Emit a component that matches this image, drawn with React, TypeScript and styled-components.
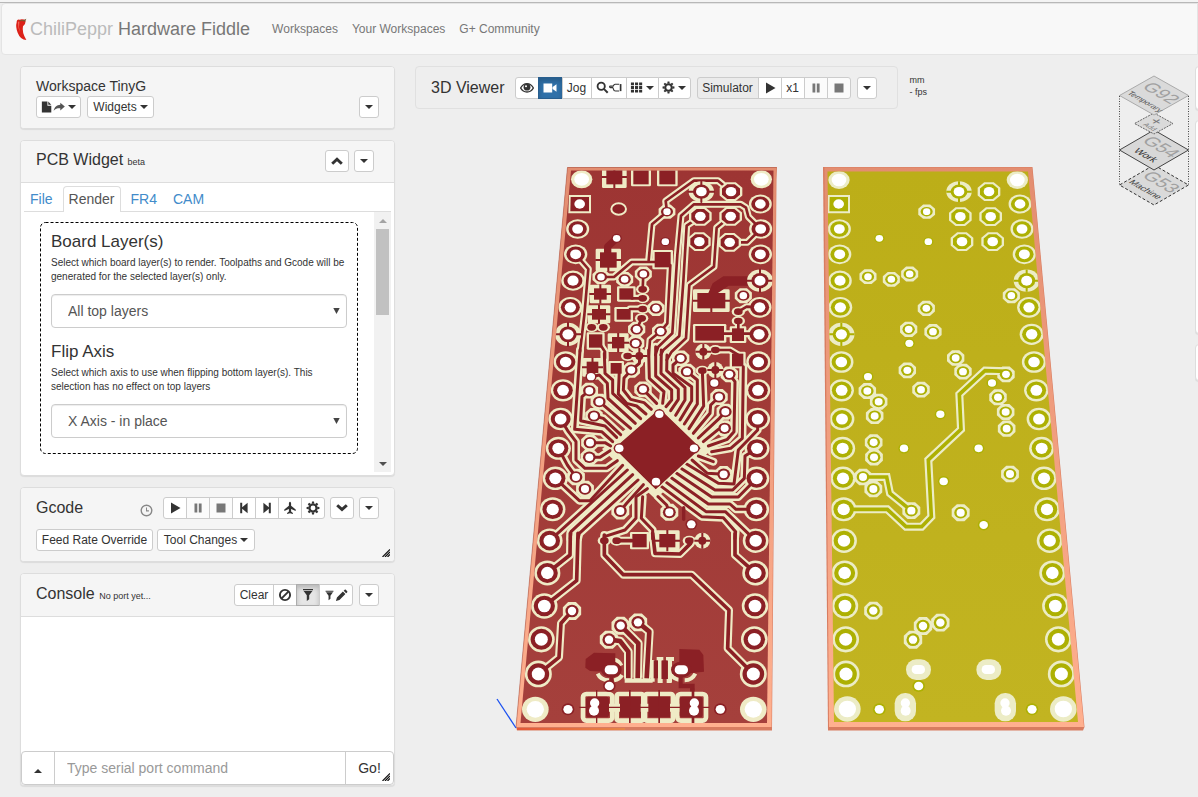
import React from 'react';
import styled, { createGlobalStyle, css } from 'styled-components';

const GlobalStyle = createGlobalStyle`
  *, *::before, *::after { box-sizing: border-box; }
  body {
    margin: 0;
    background: #eeeeee;
    color: #333333;
    font-family: "Liberation Sans", Arial, sans-serif;
    font-size: 12px;
    line-height: 18px;
  }
  button, input, select { font-family: inherit; color: inherit; }
  h1, h2, h3, p { margin: 0; font-weight: normal; }
`;

/* ---------- page frame ---------- */

const Page = styled.div`
  display: flex;
  flex-direction: column;
  min-height: 100vh;
  overflow: hidden;
`;

const TopEdge = styled.div`
  height: 3px;
  background: #f4f4f4;
  border-bottom: 1px solid #b8b8b8;
`;

const NavBar = styled.nav`
  display: flex;
  align-items: center;
  height: 52px;
  margin-left: 1px;
  padding: 0 13px;
  background: #f8f8f8;
  border: 1px solid #e4e4e4;
  border-radius: 4px 0 0 4px;
`;

const Brand = styled.a`
  display: flex;
  align-items: center;
  gap: 3px;
  margin-right: 22px;
  color: #777777;
  font-size: 18px;
  line-height: 20px;
  text-decoration: none;
`;

const BrandFaint = styled.span`
  color: #bbbbbb;
`;

const NavLink = styled.a`
  margin-right: 14px;
  color: #777777;
  text-decoration: none;
`;

const Workbench = styled.div`
  display: flex;
  flex: 1;
  align-items: stretch;
`;

const Sidebar = styled.aside`
  display: flex;
  flex: 0 0 395px;
  flex-direction: column;
  gap: 11px;
  padding: 11px 0 12px 20px;
`;

const EdgeColumn = styled.aside`
  display: flex;
  flex: 0 0 3px;
  flex-direction: column;
  gap: 10px;
  padding-top: 11px;
  overflow: hidden;
`;

/* ---------- panels ---------- */

const Panel = styled.section`
  position: relative;
  display: flex;
  flex-direction: column;
  background: #ffffff;
  border: 1px solid #dddddd;
  border-radius: 4px;
  box-shadow: 0 1px 1px rgba(0, 0, 0, 0.08);
`;

const EdgePanel = styled(Panel)<{ $h: number }>`
  flex: 0 0 auto;
  width: 374px;
  height: ${p => p.$h}px;
`;

const PanelHead = styled.header<{ $pad?: string; $line?: boolean }>`
  padding: ${p => p.$pad ?? '10px 15px'};
  background: #f5f5f5;
  border-radius: 3px;
  ${p => p.$line && css`
    border-bottom: 1px solid #dddddd;
    border-radius: 3px 3px 0 0;
  `}
`;

const Row = styled.div<{ $gap?: number; $top?: number }>`
  display: flex;
  align-items: center;
  gap: ${p => p.$gap ?? 5}px;
  margin-top: ${p => p.$top ?? 0}px;
`;

const Spacer = styled.span`
  flex: 1;
`;

const Title = styled.h2<{ $size?: number }>`
  font-size: ${p => p.$size ?? 16}px;
  line-height: 20px;
  white-space: nowrap;
`;

const Tiny = styled.small`
  font-size: 9px;
`;

const ClockSlot = styled.span`
  display: flex;
  margin-right: 5px;
  padding-top: 4px;
  color: #888888;
`;

/* ---------- buttons ---------- */

const Button = styled.button<{ $w?: number; $active?: boolean; $primary?: boolean; $shade?: boolean }>`
  display: inline-flex;
  align-items: center;
  justify-content: center;
  gap: 3px;
  height: 22px;
  min-width: ${p => p.$w ?? 20}px;
  padding: 0 3px;
  font-size: 12px;
  line-height: 18px;
  white-space: nowrap;
  background: #ffffff;
  border: 1px solid #cccccc;
  border-radius: 3px;
  &:disabled { color: #777777; background: #fbfbfb; }
  ${p => p.$shade && css`background: #ebebeb;`}
  ${p => p.$active && css`
    background: #e6e6e6;
    border-color: #adadad;
    box-shadow: inset 0 3px 5px rgba(0, 0, 0, 0.2);
  `}
  ${p => p.$primary && css`
    color: #ffffff;
    background: #3071a9;
    border-color: #285e8e;
    box-shadow: inset 0 3px 5px rgba(0, 0, 0, 0.2);
  `}
`;

const Group = styled.div`
  display: inline-flex;
  ${Button} { border-radius: 0; }
  ${Button} + ${Button} { margin-left: -1px; }
  ${Button}:first-child { border-radius: 3px 0 0 3px; }
  ${Button}:last-child { border-radius: 0 3px 3px 0; }
`;

const Caret = styled.span<{ $up?: boolean }>`
  display: inline-block;
  border-left: 4px solid transparent;
  border-right: 4px solid transparent;
  ${p => (p.$up ? 'border-bottom: 4px solid currentColor;' : 'border-top: 4px solid currentColor;')}
`;

/* ---------- PCB widget ---------- */

const Tabs = styled.nav`
  display: flex;
  align-items: flex-end;
  height: 29px;
  margin: 0 3px;
  border-bottom: 1px solid #dddddd;
`;

const Tab = styled.a<{ $active?: boolean }>`
  height: 26px;
  padding: 3px 6px 0 5px;
  margin-bottom: -1px;
  border: 1px solid transparent;
  border-bottom: 0;
  border-radius: 4px 4px 0 0;
  color: #428bca;
  font-size: 14px;
  line-height: 18px;
  text-decoration: none;
  & + & { margin-left: 3px; }
  ${p => p.$active && css`
    color: #555555;
    background: #ffffff;
    border-color: #dddddd;
  `}
`;

const ScrollArea = styled.div`
  display: flex;
  height: 260px;
  margin: 0 3px 3px 3px;
`;

const ScrollBody = styled.div`
  flex: 1;
  padding: 10px 16px 0 16px;
`;

const ScrollTrack = styled.div`
  display: flex;
  flex: 0 0 17px;
  flex-direction: column;
  align-items: center;
  background: #f1f1f1;
`;

const ScrollEnd = styled.span<{ $off?: boolean }>`
  display: flex;
  align-items: center;
  justify-content: center;
  height: 17px;
  color: ${p => (p.$off ? '#a3a3a3' : '#505050')};
`;

const ScrollThumb = styled.span`
  width: 13px;
  height: 86px;
  margin-bottom: auto;
  background: #c1c1c1;
`;

const Options = styled.div`
  position: relative;
  height: 232px;
  padding: 10px 11px 0 11px;
`;

const Outline = styled.svg`
  position: absolute;
  inset: 0;
  width: 100%;
  height: 100%;
  rect {
    width: calc(100% - 1px);
    height: calc(100% - 1px);
  }
`;

const Field = styled.div`
  height: 110px;
`;

const FieldName = styled.label`
  display: block;
  font-size: 17px;
  line-height: 20px;
`;

const Hint = styled.p`
  height: 28px;
  margin: 4px 0 10px 0;
  font-size: 10px;
  line-height: 14px;
  white-space: nowrap;
`;

const SelectBox = styled.div`
  position: relative;
`;

const Select = styled.select`
  appearance: none;
  width: 100%;
  height: 34px;
  padding: 0 16px;
  color: #555555;
  font-size: 14px;
  background: #ffffff;
  border: 1px solid #cccccc;
  border-radius: 4px;
  box-shadow: inset 0 1px 1px rgba(0, 0, 0, 0.075);
`;

const SelectMark = styled.svg`
  position: absolute;
  top: 13px;
  right: 7px;
  pointer-events: none;
`;

/* ---------- console ---------- */

const Log = styled.div`
  height: 134px;
`;

const CommandRow = styled.form`
  display: flex;
  height: 34px;
  border: 1px solid #cccccc;
  border-radius: 4px;
  background: #ffffff;
`;

const CommandButton = styled.button<{ $w: number }>`
  flex: 0 0 ${p => p.$w}px;
  padding: 0;
  font-size: 14px;
  background: transparent;
  border: 0;
`;

const CommandInput = styled.input`
  flex: 1;
  min-width: 0;
  padding: 0 12px;
  font-size: 14px;
  border: 0;
  border-left: 1px solid #cccccc;
  border-right: 1px solid #cccccc;
  &::placeholder { color: #999999; opacity: 1; }
`;

const Grip = styled.svg`
  position: absolute;
  right: 4px;
  bottom: 4px;
`;

/* ---------- viewer ---------- */

const Viewer = styled.main`
  display: grid;
  flex: 1;
  min-width: 0;
  align-items: start;
`;

const Scene = styled.svg`
  grid-area: 1 / 1;
  display: block;
  width: 100%;
`;

const ViewerTop = styled.div`
  z-index: 1;
  grid-area: 1 / 1;
  display: flex;
  gap: 12px;
  padding: 11px 0 0 20px;
`;

const Toolbar = styled.div`
  display: flex;
  align-items: center;
  gap: 6px;
  height: 43px;
  padding: 0 20px 0 15px;
  border: 1px solid #e0e0e0;
  border-radius: 4px;
`;

const ToolbarTitle = styled(Title)`
  margin-right: 4px;
`;

const Stats = styled.div`
  padding-top: 8px;
  font-size: 9px;
  line-height: 12px;
`;

/* ---------- icons (14 unit grid) ---------- */

const GEAR_TEETH = [0, 45, 90, 135, 180, 225, 270, 315];

const glyphs: Record<string, React.ReactNode> = {
  play: <path d="M3 1.5 L12.5 7 L3 12.5Z" />,
  pause: <path d="M3.5 2.5h2.8v9H3.5zM7.8 2.5h2.8v9H7.8z" />,
  stop: <path d="M2.5 2.5h9v9h-9z" />,
  back: <path d="M3.2 1.8h2v4.4L10.6 1.8v10.4L5.2 7.8v4.4h-2z" />,
  next: <path d="M10.8 1.8h-2v4.4L3.4 1.8v10.4L8.8 7.8v4.4h2z" />,
  plane: <path d="M7 .8c.8 0 1.1 1 1.1 2v2l4.6 3.6v1.5L8.1 8v2.6l1.8 1.3v1.1L7 12.3 4.1 13v-1.1l1.8-1.3V8L1.3 9.900V8.4l4.6-3.6v-2c0-1 .3-2 1.1-2z" />,
  gear: (
    <>
      <circle cx="7" cy="7" r="3.5" fill="none" stroke="currentColor" strokeWidth="2.2" />
      {GEAR_TEETH.map(a => <path key={a} d="M5.7 2.8L6 .6h2l.3 2.2z" transform={`rotate(${a} 7 7)`} />)}
    </>
  ),
  down: <path d="M1.2 5.2L3.2 3.2 7 6.6l3.8-3.4 2 2L7 10.6z" />,
  up: <path d="M1.2 8.8l2 2L7 7.2l3.8 3.6 2-2L7 3.2z" />,
  ban: <g fill="none" stroke="currentColor" strokeWidth="1.9"><circle cx="7" cy="7" r="5.1" /><path d="M10.6 3.4L3.4 10.6" /></g>,
  filter: <path d="M2 1h10v1.3H2zM2.6 3h8.8L8.2 7.2v4L5.8 13V7.2z" />,
  pencil: <path d="M1 13l1.1-3.8 6.4-6.4 2.7 2.7-6.4 6.4zM9.3 2l1-1c.5-.5 1-.5 1.5 0l1.2 1.2c.5.5.5 1 0 1.5l-1 1z" />,
  eye: (
    <>
      <path d="M.6 7C2.2 4 4.5 2.6 7 2.6S11.8 4 13.4 7C11.8 9.8 9.5 11 7 11S2.2 9.8 .6 7z" fill="none" stroke="currentColor" strokeWidth="1.4" />
      <circle cx="7" cy="6.2" r="3.4" />
      <circle cx="6" cy="5.2" r="1" fill="#fff" />
    </>
  ),
  video: <path d="M.5 2.6h8.7v8.8H.5zM9.6 6l3.9-2.8v7.6L9.6 8z" />,
  search: <><circle cx="5.6" cy="5.6" r="3.9" fill="none" stroke="currentColor" strokeWidth="2" /><path d="M8 9.4L9.4 8l4 3.8-1.6 1.6z" /></>,
  hand: <><path d="M11 3.5H6.5C5.5 3.5 5 4.5 4.5 5.5H1.5C.3 5.5.3 7.1 1.5 7.1H4.5M4.500 7.1C4.3 8.2 4.8 8.7 5 9.2 5 10.3 6 10.8 7 10.8H11" fill="none" stroke="currentColor" strokeWidth="1.2" /><path d="M11.6 3.3h1.8v7.600h-1.8z" /></>,
  grid: <path d="M1 1.5h3.3v3H1zM5.4 1.5h3.3v3H5.4zM9.8 1.5h3.3v3H9.8zM1 5.5h3.3v3H1zM5.4 5.5h3.3v3H5.4zM9.8 5.5h3.3v3H9.8zM1 9.5h3.3v3H1zM5.4 9.5h3.3v3H5.4zM9.8 9.5h3.3v3H9.8z" />,
  file: <path d="M1 .5h6.5v5H12V13.500H1zM8.500.5L12 4.500H8.500z" />,
  share: <path d="M8.500 2L13.800 6.500l-5.300 4.500V8.500C5.500 8.300 3 8.800.8 11.500 1.500 7.500 4.500 4.600 8.500 4.500z" fill="#555" />,
  clock: <g fill="none" stroke="currentColor" strokeWidth="1.5"><circle cx="7" cy="7" r="5.7" /><path d="M7 3.8V7.4H9.6" strokeWidth="1.1" /></g>,
};

const Icon = ({ name, size = 14 }: { name: string; size?: number }) => (
  <svg width={size} height={size} viewBox="0 0 14 14" fill="currentColor" aria-hidden="true">
    {glyphs[name]}
  </svg>
);

const IconButton = ({ name, w = 24, ...rest }: { name: string; w?: number } & Record<string, unknown>) => (
  <Button type="button" $w={w} aria-label={name} {...rest}><Icon name={name} /></Button>
);

const MenuButton = () => (
  <Button type="button" aria-label="Menu"><Caret /></Button>
);

const ResizeGrip = () => (
  <Grip width="8" height="8" viewBox="0 0 8 8" stroke="#111111" strokeWidth="1.2" aria-hidden="true">
    <path d="M0.500 8L8 0.500M3 8L8 3M5.500 8L8 5.500" />
  </Grip>
);

const Chili = () => (
  <svg width="12" height="24" viewBox="45 52 36 72" aria-hidden="true">
    <path d="M50 68Q50 58 59 60Q69 57 77 63Q77 74 69 80Q65 98 79 121Q61 120 53 99Q46 82 50 68Z" fill="#dc2118" />
    <path d="M54 70Q53 64 58 66Q55 82 60 98Q54 86 54 70Z" fill="#f4685c" />
    <path d="M56 61Q68 63 79 57L75 66Q68 63 60 65Z" fill="#7b5a30" />
  </svg>
);

/* ---------- circuit boards ---------- */
/* Board artwork is plotted on a grid of three units to a scene unit. */

type Pt = [number, number];

const RED = { copper: '#8b2025', mask: '#efebc6' };
const OLIVE = { copper: '#adb002', mask: '#ececc6' };

const nearness = (y: number) => (y - 73) / 1590;
const size = (y: number, far: number, near: number) => far + (near - far) * nearness(y);

const octagon = (x: number, y: number, rx: number, ry: number) => {
  const k = 0.42;
  return [[-k, -1], [k, -1], [1, -k], [1, k], [k, 1], [-k, 1], [-1, k], [-1, -k]]
    .map(([a, b]) => `${x + a * rx},${y + b * ry}`).join(' ');
};

interface Palette { copper: string; mask: string }
interface SpotProps { at: Pt; c: Palette }

const PadMask = ({ at: [x, y], c }: SpotProps) => (
  <ellipse cx={x} cy={y} rx={size(y, 34, 41)} ry={size(y, 28, 41)} fill={c.mask} />
);
const PadCopper = ({ at: [x, y], c }: SpotProps) => (
  <g>
    <ellipse cx={x} cy={y} rx={size(y, 27, 33)} ry={size(y, 22, 33)} fill={c.copper} />
    <ellipse cx={x} cy={y} rx={size(y, 16, 20)} ry={size(y, 14, 20)} fill="#fff" />
  </g>
);
const Thermal = ({ at: [x, y], c }: SpotProps) => {
  const rx = size(y, 38, 43);
  const ry = size(y, 31, 44);
  return (
    <g>
      <ellipse cx={x} cy={y} rx={rx} ry={ry} fill={c.mask} />
      <path d={`M${x - rx} ${y}H${x + rx}M${x} ${y - ry}V${y + ry}`} stroke={c.copper} strokeWidth="6" />
      <ellipse cx={x} cy={y} rx={rx * 0.66} ry={ry * 0.68} fill={c.copper} />
      <ellipse cx={x} cy={y} rx={size(y, 16, 19)} ry={size(y, 14, 19)} fill="#fff" />
    </g>
  );
};
const SquarePad = ({ at: [x, y], c }: SpotProps) => (
  <g>
    <path d={`M${x - 32} ${y - 27}h66v55h-68z`} fill={c.mask} />
    <path d={`M${x - 27} ${y - 21}h55v43h-56z`} fill={c.copper} />
    <ellipse cx={x} cy={y} rx="16" ry="14" fill="#fff" />
  </g>
);
const ViaMask = ({ at: [x, y], c }: SpotProps) => (
  <polygon points={octagon(x, y, size(y, 25, 28), size(y, 21, 28))} fill={c.mask} />
);
const ViaCopper = ({ at: [x, y], c }: SpotProps) => (
  <g>
    <ellipse cx={x} cy={y} rx={size(y, 18, 20)} ry={size(y, 14, 20)} fill={c.copper} />
    <ellipse cx={x} cy={y} rx={size(y, 11, 13)} ry={size(y, 10, 13)} fill="#fff" />
  </g>
);
const BigVia = ({ at: [x, y], c }: SpotProps) => (
  <g>
    <polygon points={octagon(x, y, 34, 28)} fill={c.mask} />
    <polygon points={octagon(x, y, 27, 22)} fill={c.copper} />
    <ellipse cx={x} cy={y} rx="16" ry="14" fill="#fff" />
  </g>
);
const Corner = ({ at: [x, y], c }: SpotProps) => (
  <g>
    <ellipse cx={x} cy={y} rx={size(y, 32, 40)} ry={size(y, 27, 38)} fill={c.mask} />
    <ellipse cx={x} cy={y} rx={size(y, 22, 26)} ry={size(y, 19, 25)} fill="#fff" />
  </g>
);
const BareVia = ({ at: [x, y], c }: SpotProps) => (
  <g>
    <ellipse cx={x} cy={y} rx={size(y, 15, 19)} ry={size(y, 13, 18)} fill={c.copper} />
    <ellipse cx={x} cy={y} rx={size(y, 11, 14)} ry={size(y, 10, 13)} fill="#fff" />
  </g>
);

const rows = [222, 298, 377, 457, 538, 621, 706, 792, 880, 970, 1063, 1157, 1254, 1353, 1453, 1557];

/* Component side: pads, vias and tracks. Tracks come in three bands of the board. */
const topLeftX = [263, 257, 249, 241, 234, 227, 219, 212, 205, 196, 188, 179, 172, 163, 154, 145];
const topRightX = [812, 811, 810, 809, 807, 805, 804, 803, 801, 800, 799, 797, 796, 795, 793, 790];

const topPads: Pt[] = [
  ...rows.map((y, i): Pt => [topLeftX[i], y]).filter((_, i) => i !== 4),
  ...rows.map((y, i): Pt => [topRightX[i], y]).filter((_, i) => i !== 2),
  [811, 147],
];
const topBig: Pt[] = [[723, 110], [631, 184], [722, 184], [628, 260], [719, 262]];
const topVias: Pt[] = [
  [531, 170], [333, 366], [404, 373], [460, 357], [760, 422], [498, 460], [440, 523], [512, 529], [437, 565],
  [572, 610], [424, 645], [591, 650], [718, 658], [459, 703], [298, 707], [328, 740], [312, 783], [687, 726],
  [706, 770], [704, 820], [300, 863], [298, 907], [258, 966], [285, 1002], [701, 958], [391, 1068], [538, 1072],
  [246, 1368], [357, 1454], [392, 1412], [444, 1402],
];
const topBare: Pt[] = [
  [380, 250], [526, 260], [303, 665], [673, 684], [604, 1108], [358, 1593], [234, 1663], [691, 1663],
];
const chipVias: Pt[] = [[508, 778], [388, 880], [612, 880], [498, 980]];

const trackBands: { dy: number; gap: number; width: number; lines: string[] }[] = [
  {
    dy: 0, gap: 21, width: 8, lines: [
      '531,170 527,138 612,77 684,77 724,110',
      '531,170 486,208 476,316',
      '500,321 425,321 372,366 333,366',
      '812,222 775,185 768,158 752,148 612,148 573,182 562,300 547,535 505,575 496,600',
      '631,184 590,212 580,380 568,543 520,585 512,600',
      '722,184 680,218 672,335 598,390 588,550 545,590 530,615',
      '719,262 772,262 812,222',
      '541,330 532,505 512,529 480,555 476,605',
      '257,298 295,342 283,480 270,590',
      '460,357 458,403',
      '425,430 460,430',
      '420,462 460,462',
      '440,523 455,490',
      '745,470 770,455 809,457',
      '700,536 807,536', '745,498 745,536',
      '325,560 345,590 345,610',
      '675,585 720,585 745,600',
    ],
  },
  {
    dy: 585, gap: 24, width: 9, lines: [
      '459,118 500,160',
      '484,178 462,158 422,148 400,120 402,84 424,60 448,40 450,18',
      '468,192 440,168 410,160 385,132 388,60',
      '452,206 368,130 368,90 345,70 343,10',
      '436,220 354,145 352,100 328,75 303,80',
      '328,155 422,235',
      '312,198 340,205 392,254',
      '298,122 276,140 272,212 345,228 380,262',
      '270,0 254,238 335,245 368,275',
      '300,278 345,278 362,288', '298,322 330,322 360,302',
      '212,207 235,245 258,275 258,330 285,355 350,355 382,332',
      '205,295 232,345 258,381',
      '196,385 268,452 300,452 398,346',
      '179,572 412,360',
      '241,566 243,545 428,374', '264,566 268,550 444,390',
      '391,483 410,460 460,404',
      '343,566 343,560 405,540 438,505 438,440 472,416',
      '458,440 454,505 488,540 488,566',
      '538,487 530,465 504,440',
      '515,410 635,500 700,503 737,545 735,566',
      '530,398 648,485 706,485 797,572',
      '545,384 655,462 720,462 738,478 799,478',
      '560,370 665,441 745,441 800,385',
      '575,356 675,420 728,420 763,385 765,318 801,295',
      '590,342 685,400 732,402 745,300 803,240 803,207',
      '606,330 652,370 701,373', '625,318 670,335',
      '476,0 478,85 522,125 518,160',
      '497,-10 497,78 545,120 545,150 528,170',
      '514,0 513,70 565,117 565,148 542,182',
      '531,15 530,62 585,113 585,150 557,196',
      '572,25 549,45 549,70 605,110 605,152 570,210',
      '591,65 622,90 622,162 583,222',
      '637,62 641,168 597,236',
      '687,141 662,165 660,190 610,250',
      '706,185 688,205 625,264',
      '704,235 685,238 640,275',
      '718,73 735,95 732,245 712,268 655,288',
      '760,50 757,265 722,295 665,305',
    ],
  },
  {
    dy: 1155, gap: 24, width: 11, lines: [
      '343,-15 343,45 400,104 605,104 717,210 713,325 790,402',
      '241,-20 240,45 172,99', '264,-20 260,122 163,198',
      '246,213 213,250 207,352 145,402',
      '735,-20 735,45 796,99',
      '488,-20 495,40 570,42 602,10',
      '380,2 425,2',
    ],
  },
];

/* Surface-mount lands: x, y, width, height and whether the land has thermal relief. */
const lands: [number, number, number, number, boolean][] = [
  [349, 44, 48, 44, true], [430, 46, 46, 42, false], [508, 46, 48, 42, false],
  [330, 292, 50, 46, true], [494, 291, 48, 46, false],
  [312, 400, 38, 34, true], [388, 400, 42, 34, false], [306, 462, 42, 32, true], [380, 462, 42, 32, false],
  [297, 538, 40, 40, false], [366, 546, 37, 34, true],
  [622, 414, 84, 46, true], [616, 513, 86, 44, false], [726, 520, 36, 38, false],
  [290, 620, 35, 34, true], [362, 624, 33, 32, false], [726, 596, 34, 38, false],
  [427, 1137, 43, 40, false], [508, 1137, 48, 40, true],
];
const dots: Pt[] = [
  [458, 403], [458, 430], [458, 462], [455, 490], [745, 470], [745, 498], [305, 517], [340, 517],
  [413, 603], [637, 647], [380, 1157], [343, 1157], [598, 1157], [676, 585],
];
const reliefDots: Pt[] = [[448, 603], [640, 590], [676, 645], [637, 1157]];

const TopArtwork = () => (
  <g strokeLinejoin="round" strokeLinecap="round">
    <g fill="none" stroke={RED.mask}>
      {trackBands.map(b => (
        <g key={b.dy} transform={`translate(0 ${b.dy})`} strokeWidth={b.gap}>
          {b.lines.map(l => <polyline key={l} points={l} />)}
        </g>
      ))}
      <g strokeWidth="26">
        <polyline points="357,1454 390,1458 415,1490 415,1566" />
        <polyline points="392,1412 445,1465 443,1566" />
        <polyline points="444,1402 478,1430 470,1566" />
      </g>
    </g>
    <polygon points="510,735 668,882 496,1032 336,882" fill={RED.mask} />
    {topPads.map(p => <PadMask key={p.join()} at={p} c={RED} />)}
    {topVias.map(p => <ViaMask key={p.join()} at={p} c={RED} />)}
    {dots.map(([x, y]) => <ellipse key={`${x},${y}`} cx={x} cy={y} rx="20" ry="15" fill={RED.mask} />)}
    {reliefDots.map(([x, y]) => (
      <g key={`${x},${y}`}>
        <circle cx={x} cy={y} r="24" fill={RED.mask} />
        <path d={`M${x - 24} ${y}h48M${x} ${y - 24}v48`} stroke={RED.copper} strokeWidth="6" strokeLinecap="butt" />
      </g>
    ))}
    {lands.map(([x, y, w, h, relief]) => (
      <g key={`${x},${y}`}>
        <rect x={x - (relief ? 13 : 7)} y={y - (relief ? 11 : 6)} width={w + (relief ? 26 : 14)} height={h + (relief ? 22 : 12)} rx="4" fill={RED.mask} />
        {relief && (
          <path d={`M${x - 14} ${y + h / 2}h${w + 28}M${x + w / 2} ${y - 12}v${h + 24}`} stroke={RED.copper} strokeWidth="6" strokeLinecap="butt" />
        )}
      </g>
    ))}

    <g fill="none" stroke={RED.copper}>
      {trackBands.map(b => (
        <g key={b.dy} transform={`translate(0 ${b.dy})`} strokeWidth={b.width}>
          {b.lines.map(l => <polyline key={l} points={l} />)}
        </g>
      ))}
      <g strokeWidth="14" strokeLinecap="butt">
        <polyline points="357,1454 390,1458 415,1490 415,1570" />
        <polyline points="392,1412 445,1465 443,1570" />
        <polyline points="444,1402 478,1430 470,1570" />
      </g>
      <polyline points="380,250 353,275 353,300" strokeWidth="22" />
    </g>
    {dots.map(([x, y]) => <ellipse key={`${x},${y}`} cx={x} cy={y} rx="13" ry="10" fill={RED.copper} />)}
    {reliefDots.map(([x, y]) => <circle key={`${x},${y}`} cx={x} cy={y} r="12" fill={RED.copper} />)}
    {lands.map(([x, y, w, h]) => <rect key={`${x},${y}`} x={x} y={y} width={w} height={h} fill={RED.copper} />)}
    <polygon points="655,414 668,385 700,364 785,364 785,392 716,392 684,414" fill={RED.copper} />
    <polygon points="509,758 635,880 497,1006 370,880" fill={RED.copper} stroke={RED.mask} strokeWidth="4" />
    <ellipse cx="386" cy="162" rx="22" ry="17" fill={RED.copper} stroke={RED.mask} strokeWidth="6" />
    <path d="M581 1058v35" stroke={RED.copper} strokeWidth="10" />

    {/* USB connector */}
    <g fill="none" stroke={RED.mask} strokeWidth="12" strokeLinecap="butt">
      <path d="M323 1556Q332 1576 357 1576M372 1576Q390 1572 396 1560M616 1556Q606 1576 584 1576M566 1574Q550 1572 544 1558M374 1514Q388 1518 394 1532" />
      <path d="M404 1577H488M488 1515V1580M509 1512V1582M540 1512V1582M500 1512H520M528 1512H552M503 1578H518M530 1578H545" />
    </g>
    <g fill={RED.copper}>
      <rect x="491" y="1516" width="13" height="54" />
      <rect x="515" y="1516" width="18" height="56" />
      <polygon points="287,1512 312,1493 376,1495 376,1535 345,1550 300,1548 286,1538" />
      <polygon points="568,1482 628,1484 640,1500 642,1550 600,1555 568,1530" />
      <ellipse cx="364" cy="1544" rx="31" ry="24" />
      <ellipse cx="574" cy="1544" rx="31" ry="24" />
      <path d="M360 1560h10v35h-10zM566 1560h12v26h36v34h-14v-20h-34z" />
    </g>
    <rect x="344" y="1531" width="40" height="27" rx="13" fill="#fff" />
    <rect x="554" y="1531" width="40" height="27" rx="13" fill="#fff" />

    {/* bottom row of lands */}
    <g fill="none" stroke={RED.mask} strokeWidth="14">
      <rect x="279" y="1617" width="88" height="80" rx="10" />
      <rect x="380" y="1617" width="80" height="80" rx="6" />
      <rect x="465" y="1617" width="84" height="80" rx="6" />
      <rect x="562" y="1617" width="86" height="80" rx="10" />
    </g>
    <path d="M350 1658h235" stroke={RED.mask} strokeWidth="24" />
    <g fill={RED.copper}>
      <rect x="288" y="1625" width="69" height="62" rx="8" />
      <rect x="390" y="1625" width="62" height="62" />
      <rect x="475" y="1625" width="65" height="62" />
      <rect x="569" y="1625" width="69" height="62" rx="8" />
      <path d="M318 1605h4v100h-4zM417 1605h5v100h-5zM505 1605h5v100h-5zM605 1600h8v105h-8zM268 1655h390v4H268z" />
    </g>
    <g fill="#fff">
      <circle cx="314" cy="1644" r="14" /><circle cx="312" cy="1667" r="15" />
      <circle cx="613" cy="1644" r="14" /><circle cx="612" cy="1667" r="15" />
    </g>

    <SquarePad at={[269, 147]} c={RED} />
    {topBig.map(p => <BigVia key={p.join()} at={p} c={RED} />)}
    {topPads.map(p => <PadCopper key={p.join()} at={p} c={RED} />)}
    {topVias.map(p => <ViaCopper key={p.join()} at={p} c={RED} />)}
    {topBare.map(p => <BareVia key={p.join()} at={p} c={RED} />)}
    {chipVias.map(p => <BareVia key={p.join()} at={p} c={RED} />)}
    <Thermal at={[634, 110]} c={RED} />
    <Thermal at={[234, 538]} c={RED} />
    <Thermal at={[810, 377]} c={RED} />
    {([[275, 73], [814, 73], [136, 1663], [790, 1663]] as Pt[]).map(p => <Corner key={p.join()} at={p} c={RED} />)}
  </g>
);

/* Solder side. */
const backLeftX = [88, 89, 90, 91, 92, 94, 95, 96, 98, 99, 101, 102, 104, 105, 107, 108];
const backRightX = [636, 643, 650, 657, 665, 672, 679, 687, 695, 702, 711, 719, 727, 736, 745, 754];
const backPads: Pt[] = [
  ...rows.map((y, i): Pt => [backLeftX[i], y]).filter((_, i) => i !== 4),
  ...rows.map((y, i): Pt => [backRightX[i], y]).filter((_, i) => i !== 2),
  [630, 147],
];
const backBig: Pt[] = [[537, 110], [451, 185], [542, 185], [456, 260], [548, 260]];
const backVias: Pt[] = [
  [350, 170], [174, 365], [244, 373], [299, 357], [604, 422], [349, 460], [296, 523], [369, 530], [437, 609],
  [459, 650], [588, 658], [292, 646], [333, 704], [172, 708], [206, 740], [194, 783], [564, 727], [587, 771],
  [590, 821], [191, 862], [192, 907], [159, 966], [190, 1002], [304, 1067], [452, 1073], [600, 957],
  [190, 1367], [339, 1413], [391, 1403], [309, 1454],
];
const backBare: Pt[] = [
  [208, 250], [355, 260], [298, 565], [174, 665], [546, 684], [391, 778], [282, 880], [506, 880],
  [401, 979], [521, 1110], [326, 1593], [208, 1663], [666, 1663],
];
const backTracks = [
  '101,1063 232,1063 288,1115 335,1115 364,1085 355,915 453,823 448,718 525,647 588,649',
  '159,966 230,966 240,1015 304,1067',
];

const BackArtwork = () => (
  <g strokeLinejoin="miter">
    <g fill="none" stroke={OLIVE.mask} strokeWidth="24">
      {backTracks.map(t => <polyline key={t} points={t} />)}
    </g>
    {backPads.map(p => <PadMask key={p.join()} at={p} c={OLIVE} />)}
    {backVias.map(p => <ViaMask key={p.join()} at={p} c={OLIVE} />)}
    <g fill="none" stroke={OLIVE.copper} strokeWidth="11">
      {backTracks.map(t => <polyline key={t} points={t} />)}
    </g>
    {backPads.map(p => <PadCopper key={p.join()} at={p} c={OLIVE} />)}
    {backVias.map(p => <ViaCopper key={p.join()} at={p} c={OLIVE} />)}
    {backBare.map(p => <BareVia key={p.join()} at={p} c={OLIVE} />)}
    {backBig.map(p => <BigVia key={p.join()} at={p} c={OLIVE} />)}
    <SquarePad at={[86, 147]} c={OLIVE} />
    <Thermal at={[447, 110]} c={OLIVE} />
    <Thermal at={[94, 538]} c={OLIVE} />
    <Thermal at={[650, 377]} c={OLIVE} />
    {([[87, 75], [622, 75], [112, 1662], [760, 1662]] as Pt[]).map(p => <Corner key={p.join()} at={p} c={OLIVE} />)}
    <g fill={OLIVE.mask}>
      <rect x="288" y="1513" width="75" height="62" rx="31" />
      <rect x="499" y="1513" width="75" height="62" rx="31" />
      <rect x="254" y="1614" width="64" height="85" rx="31" />
      <rect x="554" y="1614" width="64" height="85" rx="31" />
    </g>
    <g fill="#fff">
      <rect x="305" y="1530" width="40" height="27" rx="13" />
      <rect x="515" y="1530" width="40" height="27" rx="13" />
      <circle cx="286" cy="1644" r="14" /><circle cx="287" cy="1667" r="15" />
      <circle cx="585" cy="1644" r="14" /><circle cx="588" cy="1667" r="15" />
    </g>
  </g>
);

const iso = (x: number, y: number) => `matrix(0.866 0.5 -0.866 0.5 ${x} ${y})`;

const CoordinatePlanes = () => (
  <g fontFamily="Liberation Sans, Arial, sans-serif" textAnchor="middle">
    <path d="M1119.500 96V185M1188.500 96V185" stroke="#444" strokeDasharray="1 1.500" fill="none" />
    <polygon points="1154,165 1188.500,185 1154,205 1119.500,185" fill="#dadada" stroke="#333" strokeDasharray="3 2" />
    <text transform={iso(1156, 185)} fontSize="18" fill="#a0a0a0">G53</text>
    <text transform={iso(1143, 191)} fontSize="9" fill="#444">Machine</text>
    <polygon points="1154,130 1188.500,150 1154,170 1119.500,150" fill="#d8d8d8" stroke="#444" />
    <text transform={iso(1156, 150)} fontSize="18" fill="#a0a0a0">G54</text>
    <text transform={iso(1143, 157)} fontSize="10" fill="#333">Work</text>
    <polygon points="1154,113 1173,123.500 1154,134 1134.500,123.500" fill="#dadada" stroke="#666" strokeDasharray="2 1" />
    <text transform={iso(1152, 124)} fontSize="15" fill="#777">+</text>
    <text transform={iso(1148, 128)} fontSize="7" fill="#777">Add</text>
    <polygon points="1154,76 1188.500,95.500 1154,115 1119.500,95.500" fill="#dadada" stroke="#aaa" />
    <text transform={iso(1156, 96)} fontSize="18" fill="#a0a0a0">G92</text>
    <text transform={iso(1143, 103)} fontSize="8" fill="#555">Temporary</text>
  </g>
);

const BoardScene = () => (
  <Scene viewBox="395 55 800 742" preserveAspectRatio="xMinYMin meet" role="img" aria-label="Circuit board, both sides">
    <defs>
      <linearGradient id="rim" x1="0" y1="0" x2="0" y2="1">
        <stop offset="0" stopColor="#e38d70" /><stop offset="1" stopColor="#ffb08f" />
      </linearGradient>
      <linearGradient id="red" x1="0" y1="0" x2="0" y2="1">
        <stop offset="0" stopColor="#9d3533" /><stop offset="1" stopColor="#a5403c" />
      </linearGradient>
      <linearGradient id="olive" x1="0" y1="0" x2="0" y2="1">
        <stop offset="0" stopColor="#bcae18" /><stop offset="1" stopColor="#c2b421" />
      </linearGradient>
      <linearGradient id="axisX"><stop offset="0" stopColor="#ee3311" /><stop offset="1" stopColor="#f59030" /></linearGradient>
      <clipPath id="redArea"><polygon points="571,170.500 773.500,170.500 767,723 520.500,723" /></clipPath>
      <clipPath id="oliveArea"><polygon points="827.500,171.500 1028,171.500 1078,722 834,722" /></clipPath>
    </defs>

    <polygon points="567.500,167 777,167 776.500,180 772,730.500 517,730.500 516,727" fill="#d87c60" />
    <polygon points="567.500,167.500 776,167.500 771.500,727 516,727" fill="url(#rim)" />
    <polygon points="571,170.500 773.500,170.500 767,723 520.500,723" fill="url(#red)" />
    <g clipPath="url(#redArea)"><g transform="translate(490 155) scale(0.33333)"><TopArtwork /></g></g>
    <path d="M567.500 167.500H776.500M567.500 167.500L516 727" stroke="#b06050" strokeWidth="0.600" fill="none" />
    <path d="M497 699L516 728" stroke="#1a50f0" strokeWidth="1.300" />
    <rect x="517" y="728.500" width="108" height="1" fill="url(#axisX)" />

    <polygon points="823,167 1032.500,167 1084.500,727 1083,730.500 828,730.500" fill="#d87c60" />
    <polygon points="824.500,167.500 1032,167.500 1084,727 829,727" fill="url(#rim)" />
    <polygon points="827.500,171.500 1028,171.500 1078,722 834,722" fill="url(#olive)" />
    <g clipPath="url(#oliveArea)"><g transform="translate(810 155) scale(0.33333)"><BackArtwork /></g></g>
    <CoordinatePlanes />
  </Scene>
);

/* ---------- page ---------- */

interface SettingProps { id: string; name: string; hint: [string, string]; value: string }

const Setting = ({ id, name, hint, value }: SettingProps) => (
  <Field>
    <FieldName htmlFor={id}>{name}</FieldName>
    <Hint>{hint[0]}<br />{hint[1]}</Hint>
    <SelectBox>
      <Select id={id} defaultValue={value}><option>{value}</option></Select>
      <SelectMark width="7" height="8" viewBox="0 0 7 8" aria-hidden="true"><path d="M0.300 1H6.700L3.500 7Z" fill="#444" /></SelectMark>
    </SelectBox>
  </Field>
);

export default function App() {
  return (
    <Page>
      <GlobalStyle />
      <TopEdge />
      <NavBar>
        <Brand href="#"><Chili /><span><BrandFaint>ChiliPeppr</BrandFaint> Hardware Fiddle</span></Brand>
        <NavLink href="#">Workspaces</NavLink>
        <NavLink href="#">Your Workspaces</NavLink>
        <NavLink href="#">G+ Community</NavLink>
      </NavBar>
      <Workbench>
        <Sidebar>
          <Panel>
            <PanelHead $pad="9px 15px 10px">
              <Title $size={14}>Workspace TinyG</Title>
              <Row $gap={6}>
                <Button type="button" $w={45} aria-label="Share workspace">
                  <Row as="span" $gap={0}><Icon name="file" size={12} /><Icon name="share" size={12} /></Row>
                  <Caret />
                </Button>
                <Button type="button" $w={67}>Widgets <Caret /></Button>
                <Spacer />
                <MenuButton />
              </Row>
            </PanelHead>
          </Panel>

          <Panel>
            <PanelHead $line $pad="9px 20px 10px 15px">
              <Row>
                <Title>PCB Widget <Tiny>beta</Tiny></Title>
                <Spacer />
                <IconButton name="up" />
                <MenuButton />
              </Row>
            </PanelHead>
            <Tabs>
              <Tab href="#file">File</Tab>
              <Tab href="#render" $active>Render</Tab>
              <Tab href="#fr4">FR4</Tab>
              <Tab href="#cam">CAM</Tab>
            </Tabs>
            <ScrollArea>
              <ScrollBody>
                <Options>
                  <Outline aria-hidden="true">
                    <rect x="0.500" y="0.500" rx="5" fill="none" stroke="#000" strokeDasharray="3 2" />
                  </Outline>
                  <Setting
                    id="layers" name="Board Layer(s)" value="All top layers"
                    hint={['Select which board layer(s) to render. Toolpaths and Gcode will be', 'generated for the selected layer(s) only.']}
                  />
                  <Setting
                    id="axis" name="Flip Axis" value="X Axis - in place"
                    hint={['Select which axis to use when flipping bottom layer(s). This', 'selection has no effect on top layers']}
                  />
                </Options>
              </ScrollBody>
              <ScrollTrack>
                <ScrollEnd $off><Caret $up /></ScrollEnd>
                <ScrollThumb />
                <ScrollEnd><Caret /></ScrollEnd>
              </ScrollTrack>
            </ScrollArea>
          </Panel>

          <Panel>
            <PanelHead $pad="9px 15px 10px">
              <Row>
                <Title>Gcode</Title>
                <Spacer />
                <ClockSlot><Icon name="clock" size={13} /></ClockSlot>
                <Group>
                  <IconButton name="play" />
                  <IconButton name="pause" disabled />
                  <IconButton name="stop" disabled />
                  <IconButton name="back" />
                  <IconButton name="next" />
                  <IconButton name="plane" />
                  <IconButton name="gear" />
                </Group>
                <IconButton name="down" />
                <MenuButton />
              </Row>
              <Row $gap={4} $top={10}>
                <Button type="button" $w={117}>Feed Rate Override</Button>
                <Button type="button" $w={98}>Tool Changes <Caret /></Button>
              </Row>
            </PanelHead>
            <ResizeGrip />
          </Panel>

          <Panel>
            <PanelHead $line $pad="10px 15px">
              <Row $gap={6}>
                <Title>Console <Tiny>No port yet...</Tiny></Title>
                <Spacer />
                <Group>
                  <Button type="button" $w={40}>Clear</Button>
                  <IconButton name="ban" />
                  <IconButton name="filter" $active />
                  <Button type="button" $w={34} aria-label="Edit filter">
                    <Row as="span" $gap={0}><Icon name="filter" size={11} /><Icon name="pencil" size={13} /></Row>
                  </Button>
                </Group>
                <MenuButton />
              </Row>
            </PanelHead>
            <Log />
            <CommandRow>
              <CommandButton type="button" $w={32} aria-label="History"><Caret $up /></CommandButton>
              <CommandInput placeholder="Type serial port command" aria-label="Serial port command" />
              <CommandButton type="button" $w={47}>Go!</CommandButton>
            </CommandRow>
            <ResizeGrip />
          </Panel>
        </Sidebar>

        <Viewer>
          <BoardScene />
          <ViewerTop>
            <Toolbar>
              <ToolbarTitle>3D Viewer</ToolbarTitle>
              <Group>
                <IconButton name="eye" />
                <IconButton name="video" w={25} $primary />
                <Button type="button" $w={30}>Jog</Button>
                <Button type="button" $w={36} aria-label="Zoom to">
                  <Row as="span" $gap={0}><Icon name="search" size={13} /><Icon name="hand" size={13} /></Row>
                </Button>
                <Button type="button" $w={33} aria-label="Grid"><Icon name="grid" size={13} /><Caret /></Button>
                <Button type="button" $w={33} aria-label="Settings"><Icon name="gear" size={13} /><Caret /></Button>
              </Group>
              <Group>
                <Button type="button" $w={62} $shade>Simulator</Button>
                <IconButton name="play" />
                <Button type="button" $w={24}>x1</Button>
                <IconButton name="pause" disabled />
                <IconButton name="stop" disabled />
              </Group>
              <MenuButton />
            </Toolbar>
            <Stats>mm<br />- fps</Stats>
          </ViewerTop>
        </Viewer>

        <EdgeColumn>
          <EdgePanel $h={44} />
          <EdgePanel $h={214} />
          <EdgePanel $h={37} />
        </EdgeColumn>
      </Workbench>
    </Page>
  );
}
